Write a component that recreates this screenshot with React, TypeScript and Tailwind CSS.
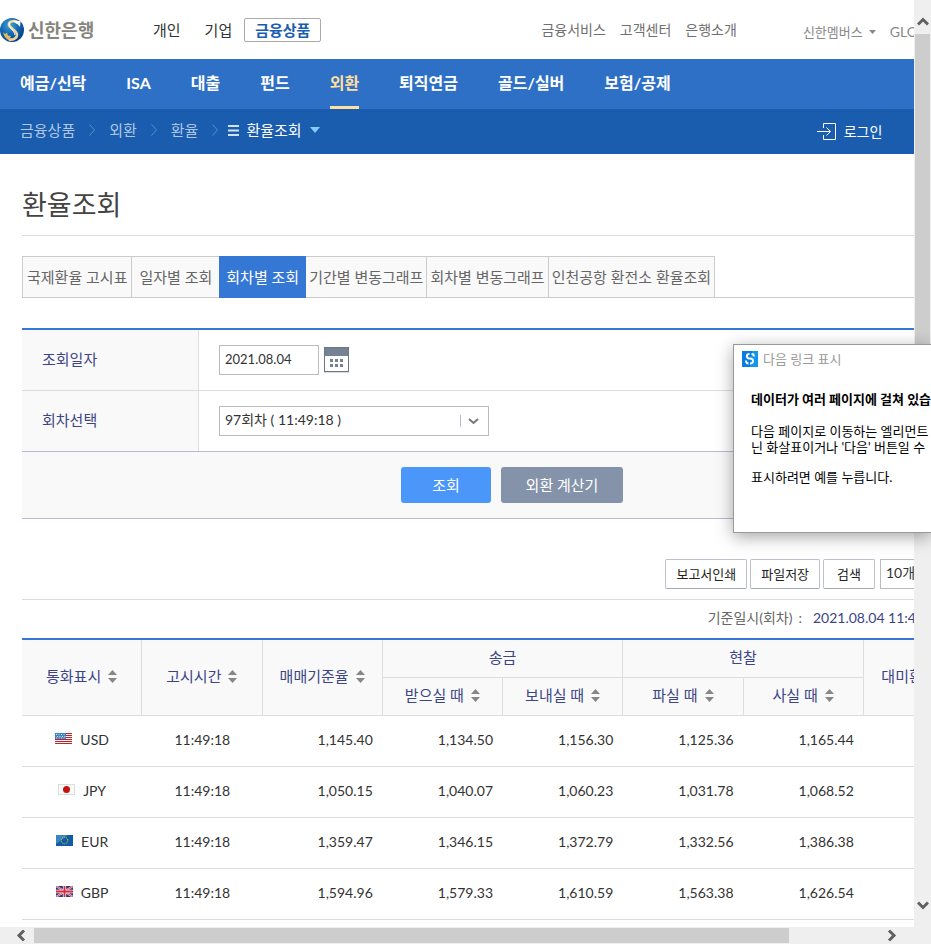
import React from "react";

const menus = ["예금/신탁", "ISA", "대출", "펀드", "외환", "퇴직연금", "골드/실버", "보험/공제"];

const tabs = [
  { label: "국제환율 고시표", pad: "px-1" },
  { label: "일자별 조회", pad: "px-[7px]" },
  { label: "회차별 조회", pad: "px-[7px]" },
  { label: "기간별 변동그래프", pad: "px-[3px]" },
  { label: "회차별 변동그래프", pad: "px-[3px]" },
  { label: "인천공항 환전소 환율조회", pad: "px-[3px]" },
];

const rates = [
  { code: "USD", values: ["1,145.40", "1,134.50", "1,156.30", "1,125.36", "1,165.44"] },
  { code: "JPY", values: ["1,050.15", "1,040.07", "1,060.23", "1,031.78", "1,068.52"] },
  { code: "EUR", values: ["1,359.47", "1,346.15", "1,372.79", "1,332.56", "1,386.38"] },
  { code: "GBP", values: ["1,594.96", "1,579.33", "1,610.59", "1,563.38", "1,626.54"] },
];

function Logo() {
  return (
    <svg width="24" height="24" viewBox="0 0 24 24" aria-hidden="true">
      <defs>
        <radialGradient id="globe" cx="0.4" cy="0.3" r="0.75">
          <stop offset="0" stopColor="#3fa5dc" />
          <stop offset="0.5" stopColor="#1268b3" />
          <stop offset="1" stopColor="#073a7e" />
        </radialGradient>
      </defs>
      <circle cx="12" cy="12" r="12" fill="url(#globe)" />
      <path d="M18.500 4.500C15 2 9 3 9 6.500 9 10 17 12 17 17c0 3-3.500 5-8 4.500" fill="none" stroke="#f0d69a" strokeWidth="2.600" />
      <path d="M13 3l7.500 0L20 9l-2-2.500-2-1z" fill="#fff" />
      <path d="M3 14l2 2 2-1.500 1 3 3 .5-2 4.500C6 21 3.500 18 3 14z" fill="#e2b95d" />
      <path d="M9.500 4.500C7 9 14.500 12 15 17" fill="none" stroke="#fff" strokeWidth="1" />
    </svg>
  );
}

function Crumb() {
  return (
    <svg width="6" height="12" viewBox="0 0 6 12" aria-hidden="true">
      <path d="M.5.5l5 5.500-5 5.500" fill="none" stroke="#5b8cc8" />
    </svg>
  );
}

function Sort() {
  return (
    <svg width="9" height="13" viewBox="0 0 9 13" className="shrink-0" aria-hidden="true">
      <path d="M0 5L4.500 0 9 5zM0 8l4.500 5L9 8z" fill="#888" />
    </svg>
  );
}

function Chevron({ turn }: { turn: string }) {
  return (
    <svg width="12" height="9" viewBox="0 0 12 9" className={turn} aria-hidden="true">
      <path d="M1 1.500l5 5 5-5" fill="none" stroke="#606060" strokeWidth="3" />
    </svg>
  );
}

function Flag({ code }: { code: string }) {
  return (
    <svg width="17" height="11" viewBox="0 0 17 11" className="mb-1 shrink-0" role="img" aria-label={code}>
      {code === "USD" && (
        <>
          <rect width="17" height="11" fill="#f4eeee" />
          <path d="M0 .5h17M0 2.500h17M0 4.500h17M0 6.500h17M0 8.500h17M0 10.500h17" stroke="#b3282d" />
          <rect width="11" height="6" fill="#3c82c4" />
          <path d="M1 1.500h10M2 3.500h9M1 5h10" stroke="#d8ecfa" strokeDasharray="1 1.500" />
        </>
      )}
      {code === "JPY" && (
        <>
          <rect x=".5" y=".5" width="16" height="10" fill="#fafafa" stroke="#dcdcdc" />
          <circle cx="8.500" cy="5.500" r="3.500" fill="#c4130f" />
        </>
      )}
      {code === "EUR" && (
        <>
          <rect width="17" height="11" fill="#0f5ba6" />
          <path d="M0 0h12L0 9z" fill="#3e83bd" />
          <circle cx="8.500" cy="5.500" r="3.300" fill="none" stroke="#f2e230" strokeDasharray="1 1.070" />
        </>
      )}
      {code === "GBP" && (
        <>
          <rect width="17" height="11" fill="#2b3474" />
          <path d="M0 0l17 11M17 0L0 11" stroke="#e9c4cd" strokeWidth="2" />
          <path d="M0 0l17 11M17 0L0 11" stroke="#c9405a" strokeWidth=".8" />
          <path d="M8.500 0v11M0 5.500h17" stroke="#f6e6ea" strokeWidth="3.400" />
          <path d="M8.500 0v11M0 5.500h17" stroke="#cf2d43" strokeWidth="1.800" />
        </>
      )}
    </svg>
  );
}

function SortHead({ label }: { label: string }) {
  return (
    <button type="button" className="flex w-full items-center justify-center gap-[7px] whitespace-nowrap leading-5">
      {label}
      <Sort />
    </button>
  );
}

function Header() {
  return (
    <header className="whitespace-nowrap">
      <div className="flex h-[59px] items-center">
        <a href="#" className="flex w-[153px] items-center gap-1 text-lg leading-6 font-bold text-[#85857d]">
          <Logo />
          신한은행
        </a>
        <nav className="flex items-center text-[#333]">
          <a href="#" className="mr-6">개인</a>
          <a href="#" className="mr-3">기업</a>
          <a href="#" className="flex h-6 items-center rounded-xs border border-[#aaa] px-2.5 font-bold text-[#1a5dae]">금융상품</a>
        </nav>
        <nav className="ml-[220px] flex gap-[14px] text-sm text-[#707070]">
          <a href="#">금융서비스</a>
          <a href="#">고객센터</a>
          <a href="#">은행소개</a>
        </nav>
        <nav className="ml-[66px] flex items-center pt-1 text-[13px] text-[#888]">
          <a href="#">신한멤버스</a>
          <svg width="7" height="4" viewBox="0 0 7 4" className="mr-3.5 ml-1.5" aria-hidden="true">
            <path d="M0 0h7L3.500 4z" fill="#888" />
          </svg>
          <a href="#" className="text-sm">GLOBAL</a>
        </nav>
      </div>
      <nav className="flex h-[50px] gap-10 bg-[#2d70c5] px-5 text-base font-bold text-white">
        {menus.map((m) => (
          <a
            key={m}
            href="#"
            className={
              m === "외환"
                ? "flex h-full items-center border-b-3 border-[#ffdf9f] pt-px text-[#ffdf9f]"
                : "flex h-full items-center pb-[2px]"
            }
          >
            {m}
          </a>
        ))}
      </nav>
      <div className="flex h-[45px] items-center bg-[#1a5dae] pl-5 text-[#afc7e4]">
        <nav className="flex items-center gap-3.5 pb-[3px]">
          <a href="#">금융상품</a>
          <Crumb />
          <a href="#">외환</a>
          <Crumb />
          <a href="#">환율</a>
          <Crumb />
        </nav>
        <button type="button" className="ml-2.5 flex items-center pb-[3px] text-white">
          <svg width="11" height="11" viewBox="0 0 11 11" className="mr-[7px]" aria-hidden="true">
            <path d="M0 1h11M0 5.500h11M0 10h11" stroke="#d3e2f3" strokeWidth="2" />
          </svg>
          환율조회
          <svg width="10" height="6" viewBox="0 0 10 6" className="ml-2" aria-hidden="true">
            <path d="M0 0h10L5 6z" fill="#85cdff" />
          </svg>
        </button>
        <a href="#" className="ml-[497px] flex items-center gap-2 text-sm text-white">
          <svg width="19" height="17" viewBox="0 0 19 17" aria-hidden="true">
            <path d="M6.500 5V.5h12v16h-12V12M0 8.500h13M9.500 4.500l4 4-4 4" fill="none" stroke="#fff" />
          </svg>
          로그인
        </a>
      </div>
    </header>
  );
}

function SearchForm() {
  const label = "flex h-[60px] w-[177px] items-center border-r border-[#ddd] bg-[#f9f9f9] pb-[3px] pl-5 text-[#3c4586]";
  return (
    <form className="mt-[30px] border-t-2 border-[#3577d4]" onSubmit={(e) => e.preventDefault()}>
      <div className="flex border-b border-[#ddd]">
        <label htmlFor="date" className={label}>
          조회일자
        </label>
        <div className="flex items-center gap-[5px] pl-5">
          <input id="date" type="text" defaultValue="2021.08.04" className="h-[30px] w-[100px] border border-[#bbb] bg-white px-[5px] pb-0.5 text-[13px] text-[#333]" />
          <button type="button" aria-label="달력">
            <svg width="25" height="26" viewBox="0 0 25 26" aria-hidden="true">
              <rect x=".5" y=".5" width="24" height="24" fill="#fff" stroke="#6b7789" />
              <rect x="1" y="1" width="23" height="8" fill="#758293" />
              <path d="M6 13.500h14M6 18.500h14" stroke="#758293" strokeWidth="3" strokeDasharray="3 2" />
              <path d="M0 25.500h25" stroke="#d9dce2" />
            </svg>
          </button>
        </div>
      </div>
      <div className="flex border-b border-[#b7bad3]">
        <label htmlFor="round" className={label}>
          회차선택
        </label>
        <div className="flex items-center pl-5">
          <div className="relative">
            <select id="round" className="h-[30px] w-[270px] appearance-none border border-[#bbb] bg-white px-[5px] pb-0.5 text-sm text-[#333]">
              <option>97회차 ( 11:49:18 )</option>
            </select>
            <svg width="20" height="12" viewBox="0 0 20 12" className="pointer-events-none absolute top-[9px] right-[9px]" aria-hidden="true">
              <path d="M.5 0v12" stroke="#bbc" />
              <path d="M9 4l4.500 4L18 4" fill="none" stroke="#777" strokeWidth="2" />
            </svg>
          </div>
        </div>
      </div>
      <div className="flex h-[67px] items-center justify-center gap-2.5 border-b border-[#b7bad3] bg-[#f9f9f9] pl-[18px] text-white">
        <button type="submit" className="h-9 w-[90px] rounded-[3px] bg-[#4a96f9]">조회</button>
        <button type="button" className="h-9 w-[122px] rounded-[3px] bg-[#8493a9]">외환 계산기</button>
      </div>
    </form>
  );
}

function RateTable() {
  const head = "border-r border-b border-[#ddd] pb-[3px] font-normal";
  return (
    <table className="w-full table-fixed border-separate border-spacing-0 border-t-2 border-[#3577d4]">
      <thead className="bg-[#f9f9f9] text-[#3c4586]">
        <tr className="h-[38px]">
          <th rowSpan={2} className={head}><SortHead label="통화표시" /></th>
          <th rowSpan={2} className={head}><SortHead label="고시시간" /></th>
          <th rowSpan={2} className={head}><SortHead label="매매기준율" /></th>
          <th colSpan={2} className={head}>송금</th>
          <th colSpan={2} className={head}>현찰</th>
          <th rowSpan={2} className="border-b border-[#ddd] pb-[3px] font-normal"><SortHead label="대미환산율" /></th>
        </tr>
        <tr className="h-[38px]">
          <th className={head}><SortHead label="받으실 때" /></th>
          <th className={head}><SortHead label="보내실 때" /></th>
          <th className={head}><SortHead label="파실 때" /></th>
          <th className={head}><SortHead label="사실 때" /></th>
        </tr>
      </thead>
      <tbody className="text-sm text-[#333]">
        {rates.map((r) => (
          <tr key={r.code} className="h-[51px]">
            <td className="border-b border-[#ddd] pb-0.5">
              <div className="flex items-center justify-center gap-2">
                <Flag code={r.code} />
                {r.code}
              </div>
            </td>
            <td className="border-b border-[#ddd] pb-0.5 text-center">11:49:18</td>
            {r.values.map((v) => (
              <td key={v} className="border-b border-[#ddd] pr-2.5 pb-0.5 text-right">{v}</td>
            ))}
            <td className="border-b border-[#ddd]" />
          </tr>
        ))}
      </tbody>
    </table>
  );
}

function NextLinkDialog() {
  return (
    <section
      role="dialog"
      aria-labelledby="dialog-title"
      className="absolute top-[344px] right-0 left-[733px] h-[189px] overflow-hidden border border-r-0 border-[#999] bg-white whitespace-nowrap text-[13px] leading-4 text-black shadow-[0_4px_16px_rgba(0,0,0,0.35)]"
    >
      <h2 id="dialog-title" className="flex h-7 items-center gap-[5px] pl-2 text-[#999]">
        <svg width="16" height="16" viewBox="0 0 16 16" aria-hidden="true">
          <rect width="16" height="16" fill="#0c7be0" />
          <path d="M10 0h6v16H8z" fill="#1397ec" />
          <path d="M7.500 3C4 3 4 7 7 7.500h1.500C12 8 12 12.500 8 12.500M4 9.500c0 2 1 3 2.500 3M9.500 3C11 3 12 4 12 5.500" fill="none" stroke="#fff" strokeWidth="1.800" />
        </svg>
        다음 링크 표시
      </h2>
      <div className="pl-[17px]">
        <p className="mt-[18px] font-bold">데이터가 여러 페이지에 걸쳐 있습</p>
        <p className="mt-4">
          다음 페이지로 이동하는 엘리먼트
          <br />
          닌 화살표이거나 '다음' 버튼일 수
        </p>
        <p className="mt-[14px]">표시하려면 예를 누릅니다.</p>
      </div>
    </section>
  );
}

export default function App() {
  const tool = "h-[30px] rounded-xs border border-[#bcc0cf] border-b-[#a3a8b8] bg-white px-2.5";
  return (
    <div className="relative grid h-screen grid-cols-[minmax(0,1fr)_17px] grid-rows-[minmax(0,1fr)_17px] overflow-hidden bg-white font-['Lato','Noto_Sans_CJK_KR',sans-serif] text-[15px] leading-5">
      <div className="overflow-hidden">
        <div className="min-w-[1006px]">
          <Header />
          <main className="px-[22px] whitespace-nowrap">
            <h1 className="flex h-[82px] items-center border-b border-[#ddd] pt-5 text-[27px] leading-10 text-[#444]">환율조회</h1>
            <nav className="mt-5 flex h-[42px] border-b border-[#ccc]">
              {tabs.map((t, i) => (
                <a
                  key={t.label}
                  href="#"
                  className={
                    (i === 2
                      ? "flex h-[42px] items-center bg-[#3577d4] text-white "
                      : i === 0
                        ? "flex h-[42px] items-center border border-[#ccc] bg-[#f9f9f9] text-[#666] "
                        : i === 1
                          ? "flex h-[42px] items-center border-y border-[#ccc] bg-[#f9f9f9] text-[#666] "
                          : "flex h-[42px] items-center border border-l-0 border-[#ccc] bg-[#f9f9f9] text-[#666] ") + t.pad
                  }
                >
                  {t.label}
                </a>
              ))}
            </nav>
            <SearchForm />
            <div className="mt-10 flex justify-end gap-[3px] border-b border-[#ddd] pb-2.5 text-[13px] text-[#222]">
              <button type="button" className={tool}>보고서인쇄</button>
              <button type="button" className={tool}>파일저장</button>
              <button type="button" className="h-[30px] rounded-xs border border-[#bcc0cf] border-b-[#a3a8b8] bg-white px-[13px]">검색</button>
              <select aria-label="페이지당 개수" className="ml-[2px] h-[30px] w-[104px] appearance-none border border-[#bbb] bg-white px-[5px] pb-0.5 text-sm text-[#333]">
                <option>10개</option>
              </select>
            </div>
            <p className="flex h-[38px] items-center justify-end pb-0.5 text-sm text-[#666]">
              <span>기준일시(회차)</span>
              <span className="mr-[11px] ml-1.5">:</span>
              <span className="text-[#3c4586]">2021.08.04 11:49:18 (97회)</span>
            </p>
            <RateTable />
          </main>
        </div>
      </div>
      <div className="flex flex-col bg-[#efefef]">
        <div className="flex h-[34px] items-end justify-center pb-2">
          <Chevron turn="rotate-180" />
        </div>
        <div className="mx-px h-[400px] bg-[#cdcdcd]" />
        <div className="mt-auto flex h-[26px] items-start justify-center">
          <Chevron turn="" />
        </div>
      </div>
      <div className="flex items-center bg-[#efefef]">
        <div className="flex w-[34px] justify-end pr-[7px]">
          <Chevron turn="rotate-90" />
        </div>
        <div className="h-[15px] grow bg-[#cdcdcd]" />
        <div className="flex w-[125px] justify-end pr-4">
          <Chevron turn="-rotate-90" />
        </div>
      </div>
      <div className="bg-[#efefef]" />
      <NextLinkDialog />
    </div>
  );
}
